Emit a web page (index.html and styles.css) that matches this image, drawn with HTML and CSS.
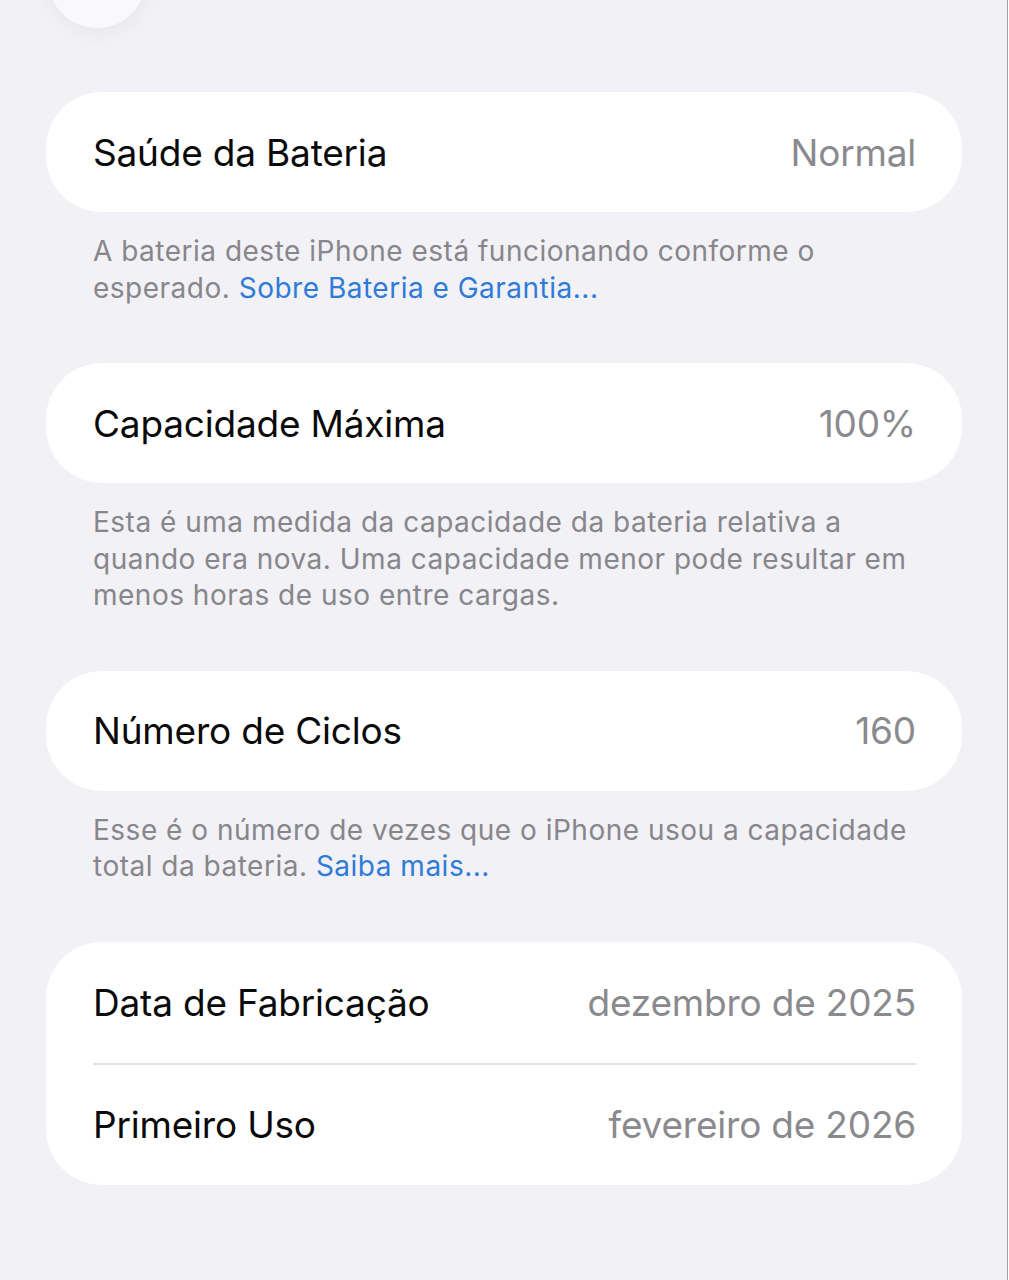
FILE: index.html
```html
<!DOCTYPE html>
<html lang="pt-BR">
<head>
  <meta charset="UTF-8">
  <title>Saúde da Bateria</title>
  <link rel="stylesheet" href="styles.css">
</head>
<body>
  <div class="page">
    <div class="nav">
      <button class="back-btn" aria-label="Voltar"></button>
    </div>

    <div class="card">
      <div class="row">
        <span class="label">Saúde da Bateria</span>
        <span class="value">Normal</span>
      </div>
    </div>
    <p class="note">A bateria deste iPhone está funcionando conforme o esperado. <a href="#">Sobre Bateria e Garantia...</a></p>

    <div class="card">
      <div class="row">
        <span class="label">Capacidade Máxima</span>
        <span class="value">100%</span>
      </div>
    </div>
    <p class="note">Esta é uma medida da capacidade da bateria relativa a quando era nova. Uma capacidade menor pode resultar em menos horas de uso entre cargas.</p>

    <div class="card">
      <div class="row">
        <span class="label">Número de Ciclos</span>
        <span class="value">160</span>
      </div>
    </div>
    <p class="note">Esse é o número de vezes que o iPhone usou a capacidade total da bateria. <a href="#">Saiba mais...</a></p>

    <div class="card card-group">
      <div class="row">
        <span class="label">Data de Fabricação</span>
        <span class="value">dezembro de 2025</span>
      </div>
      <div class="row">
        <span class="label">Primeiro Uso</span>
        <span class="value">fevereiro de 2026</span>
      </div>
    </div>
  </div>
</body>
</html>
```

FILE: styles.css
```css
html, body {
  margin: 0;
  padding: 0;
  background: #fff;
}
body {
  font-family: Inter, "Noto Sans", Arial, sans-serif;
  color: #0a0a0a;
}
.page {
  width: 1008px;
  min-height: 1280px;
  box-sizing: border-box;
  background: #f2f1f6;
  border-right: 1px solid #a4a4a8;
  padding: 0 45px 0 46px;
  display: flex;
  flex-direction: column;
  overflow: hidden;
}
.nav {
  height: 28px;
  margin-bottom: 64px;
}
.back-btn {
  display: block;
  width: 98px;
  height: 98px;
  margin: -70px 0 0 2px;
  border: none;
  border-radius: 50%;
  background: #f9f9fc;
  box-shadow: 0 4px 22px rgba(0, 0, 0, 0.05);
}
.card {
  background: #fff;
  border-radius: 56px;
}
.row {
  height: 120px;
  padding: 0 46px 0 47px;
  display: flex;
  align-items: center;
  justify-content: space-between;
  font-size: 37px;
  letter-spacing: -0.2px;
}
.card-group .row {
  height: 121px;
}
.card-group .row + .row {
  border-top: 2px solid #e3e3e7;
  margin: 0 46px 0 47px;
  padding: 0;
  height: 120px;
}
.value {
  color: #8a8a8e;
}
.note {
  margin: 21px 0 57px;
  padding: 0 46px 0 47px;
  font-size: 28px;
  line-height: 36.5px;
  color: #86868b;
  letter-spacing: 0.5px;
}
.note a {
  color: #2f7bd8;
  text-decoration: none;
}
```
